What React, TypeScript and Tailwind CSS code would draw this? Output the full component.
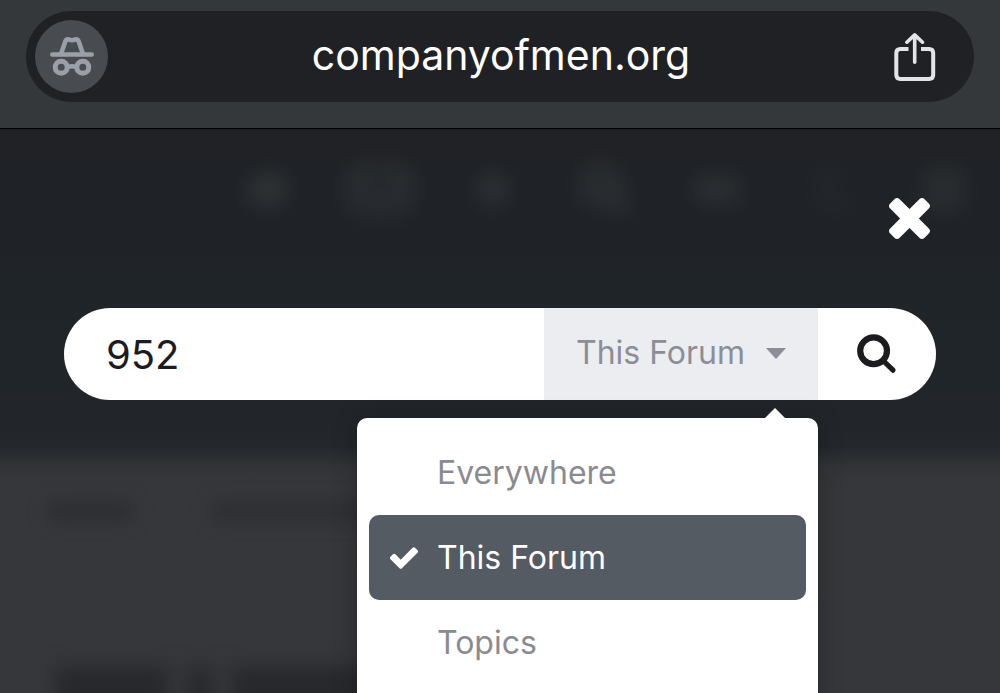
import { useState } from "react";
import { FaBars, FaHome, FaPlus, FaRegEnvelope, FaRegMoon, FaSearch, FaVolumeUp } from "react-icons/fa";

const scopes = ["Everywhere", "This Forum", "Topics"];

function IncognitoIcon() {
  return (
    <svg viewBox="0 0 44 40" className="h-10 w-11" fill="none" stroke="currentColor" strokeLinecap="round" strokeLinejoin="round" aria-hidden="true">
      <path d="M2.3 17.5H41.7" strokeWidth="4.6" />
      <path d="M11 17L15.3 4.5Q16.2 2.1 18.4 2.4Q22 4.1 25.6 2.4Q27.8 2.1 28.7 4.5L33 17" strokeWidth="4.6" />
      <circle cx="11.2" cy="30.3" r="6" strokeWidth="5" />
      <circle cx="32.8" cy="30.3" r="6" strokeWidth="5" />
      <path d="M17.5 30Q22 28.6 26.5 30" strokeWidth="4.6" />
    </svg>
  );
}

function ShareIcon() {
  return (
    <svg viewBox="0 0 42 48" className="h-12 w-[42px]" fill="none" stroke="currentColor" strokeWidth="4" strokeLinecap="round" strokeLinejoin="round" aria-hidden="true">
      <path d="M14.5 15.9H6.5Q2.3 15.9 2.3 20.1V41.7Q2.3 45.9 6.5 45.9H35Q39.2 45.9 39.2 41.7V20.1Q39.2 15.9 35 15.9H27" strokeLinecap="butt" />
      <path d="M20.7 29.3V2.5M12.9 9.2L20.7 1.9L28.5 9.2" strokeWidth="3.6" />
    </svg>
  );
}

function CloseIcon() {
  return (
    <svg viewBox="302 366 1188 1188" className="size-[41px]" fill="currentColor" aria-hidden="true">
      <path d="M1490 1322q0 40-28 68l-136 136q-28 28-68 28t-68-28l-294-294-294 294q-28 28-68 28t-68-28l-136-136q-28-28-28-68t28-68l294-294-294-294q-28-28-28-68t28-68l136-136q28-28 68-28t68 28l294 294 294-294q28-28 68-28t68 28l136 136q28 28 28 68t-28 68l-294 294 294 294q28 28 28 68z" />
    </svg>
  );
}

function CheckIcon() {
  return (
    <svg viewBox="121 334 1550 1188" className="h-[22px] w-7" fill="currentColor" aria-hidden="true">
      <path d="M1671 566q0 40-28 68l-724 724-136 136q-28 28-68 28t-68-28l-136-136-362-362q-28-28-28-68t28-68l136-136q28-28 68-28t68 28l294 295 656-657q28-28 68-28t68 28l136 136q28 28 28 68z" />
    </svg>
  );
}

function SearchIcon() {
  return (
    <svg viewBox="0 0 40 40" className="size-10" fill="none" stroke="currentColor" strokeLinecap="round" aria-hidden="true">
      <circle cx="16.6" cy="16.8" r="13.4" strokeWidth="6.2" />
      <path d="M26.5 27L36 36.2" strokeWidth="5.2" />
    </svg>
  );
}

function Backdrop() {
  return (
    <div aria-hidden="true" className="absolute inset-0 overflow-hidden bg-linear-[180deg,#202125_0px,#1f2327_60px,#20252a_220px,#22262b_300px,#24282c_318px,#323437_338px,#36373a_360px,#36373b_100%]">
      <div className="grid h-[120px] grid-cols-7 place-items-center pl-[211px] text-[42px] text-[#4a4a4c] opacity-60 blur-[11px]">
        <FaHome />
        <FaRegEnvelope className="text-[60px]" />
        <FaPlus />
        <FaSearch className="text-[48px]" />
        <FaVolumeUp />
        <FaRegMoon className="opacity-50" />
        <FaBars className="text-[46px]" />
      </div>
      <div className="mt-[254px] flex gap-20 pl-12 blur-[9px]">
        <div className="h-4 w-[84px] bg-[#2b2c2f]" />
        <div className="h-4 w-60 bg-[#2c2d30]" />
      </div>
      <div className="mt-[148px] flex gap-5 pl-14 blur-[10px]">
        <div className="h-14 w-28 bg-[#27282b]" />
        <div className="h-14 w-6 bg-[#27282b]" />
        <div className="h-14 w-44 bg-[#27282b]" />
      </div>
    </div>
  );
}

export default function App() {
  const [query, setQuery] = useState("952");
  const [scope, setScope] = useState("This Forum");
  const [open, setOpen] = useState(true);

  return (
    <div className="flex h-screen flex-col overflow-hidden bg-[#36373a] font-['Inter','Liberation_Sans',sans-serif]">
      <header className="border-b border-black bg-[#35383b] px-[26px] pt-[11px] pb-[26px]">
        <div className="flex items-center justify-between rounded-full bg-[#202125] py-[9px] pr-[38px] pl-[9px]">
          <button type="button" aria-label="Incognito" className="flex size-[73px] items-center justify-center rounded-full bg-[#484c51] text-[#9b9fa7]">
            <IncognitoIcon />
          </button>
          <span className="pb-1 text-[41px] leading-[52px] text-white">companyofmen.org</span>
          <button type="button" aria-label="Share" className="text-[#e3e4e8]">
            <ShareIcon />
          </button>
        </div>
      </header>

      <main className="relative flex-1">
        <Backdrop />
        <div className="relative">
          <div className="flex justify-end pt-[69px] pr-[70px]">
            <button type="button" aria-label="Close search" className="text-white">
              <CloseIcon />
            </button>
          </div>

          <form role="search" onSubmit={(e) => e.preventDefault()} className="mx-16 mt-[69px] flex h-[92px] rounded-full bg-white">
            <input
              type="text"
              aria-label="Search"
              value={query}
              onChange={(e) => setQuery(e.target.value)}
              className="min-w-0 flex-1 rounded-l-full bg-transparent pt-0.5 pl-[42px] text-[40px] text-[#1c1c1e] outline-none"
            />
            <div className="relative">
              <button
                type="button"
                aria-haspopup="menu"
                aria-expanded={open}
                onClick={() => setOpen(!open)}
                className="flex h-full w-[274px] items-center justify-between bg-[#ecedf0] px-8 pb-0.5 text-[32px] text-[#8b8e96]"
              >
                {scope}
                <svg viewBox="0 0 20 11" className="h-[11px] w-5" fill="currentColor" aria-hidden="true">
                  <path d="M0 0H20L10 11Z" />
                </svg>
              </button>
              {open && (
                <div role="menu" className="absolute top-[110px] right-0 w-[461px] rounded-[10px] bg-white px-3 pt-3 pb-6 shadow-[0_4px_24px_rgba(0,0,0,0.25)]">
                  <svg viewBox="0 0 22 11" className="absolute -top-[10px] right-8 h-[11px] w-[22px] text-white" fill="currentColor" aria-hidden="true">
                    <path d="M0 11L11 0L22 11Z" />
                  </svg>
                  {scopes.map((name) => (
                    <button
                      key={name}
                      type="button"
                      role="menuitemradio"
                      aria-checked={name === scope}
                      onClick={() => setScope(name)}
                      className={
                        "flex h-[85px] w-full items-center gap-[19px] rounded-[10px] pl-[21px] text-[32px] " +
                        (name === scope ? "bg-[#545b63] text-white" : "text-[#8a8b8f]")
                      }
                    >
                      <span className="w-7">{name === scope && <CheckIcon />}</span>
                      {name}
                    </button>
                  ))}
                </div>
              )}
            </div>
            <button type="submit" aria-label="Submit search" className="flex w-[118px] items-center justify-center rounded-r-full text-[#1c1c1e]">
              <SearchIcon />
            </button>
          </form>
        </div>
      </main>
    </div>
  );
}
